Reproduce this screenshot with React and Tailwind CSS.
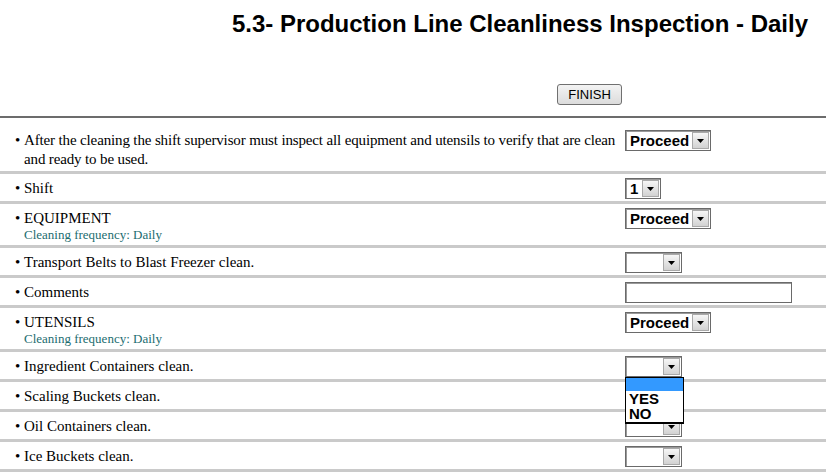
import React from 'react';

const serif = { fontFamily: '"Liberation Serif", "Times New Roman", serif' };

function Arrow() {
  return (
    <div className="m-[1px] flex w-[17px] items-center justify-center border border-[#a9a9a9] bg-gradient-to-b from-[#f6f6f6] to-[#d2d2d2]">
      <svg width="7" height="4" viewBox="0 0 7 4">
        <path d="M0 0h7L3.5 4z" fill="#000" />
      </svg>
    </div>
  );
}

function Select({ value, width, children }) {
  return (
    <div className={`relative flex h-[21px] ${width} border border-[#6a6a6a] bg-white shadow-[inset_1px_1px_0_#9a9a9a]`}>
      <div className="flex-1 truncate pl-[4px] text-[15px] font-bold leading-[19px] text-black">
        {value}
      </div>
      <Arrow />
      {children}
    </div>
  );
}

function Row({ label, sub, children, first }) {
  return (
    <div className="flex border-b-[3px] border-[#cacaca]">
      <div className={`w-[625px] shrink-0 pl-[15px] pr-[4px] pt-[5px] ${first ? 'pb-[2px] tracking-[-0.14px]' : 'pb-[3px]'}`} style={serif}>
        <div className="flex text-[15px] leading-[19px] text-black">
          <span className="w-[9px] shrink-0">•</span>
          <span>{label}</span>
        </div>
        {sub && (
          <div className="pl-[9px] text-[13px] leading-[14px] text-[#1b6d70]">{sub}</div>
        )}
      </div>
      <div className="pt-[4px]">{children}</div>
    </div>
  );
}

export default function App() {
  return (
    <div className="h-[475px] w-[826px] overflow-hidden bg-white" style={{ fontFamily: '"Liberation Sans", Arial, sans-serif' }}>
      <h1 className="pr-[18px] pt-[10px] text-right text-[24px] font-bold leading-[28px] text-black">
        5.3- Production Line Cleanliness Inspection - Daily
      </h1>

      <div className="flex pl-[557px] pt-[46px]">
        <button className="h-[21px] w-[65px] rounded-[3px] border border-[#707070] bg-gradient-to-b from-[#f3f3f3] to-[#dcdcdc] text-[13px] leading-[19px] text-black">
          FINISH
        </button>
      </div>

      <div className="mt-[11px] h-[2px] bg-[#6c6c6c]" />

      <div className="pt-[8px]">
        <Row first label="After the cleaning the shift supervisor must inspect all equipment and utensils to verify that are clean and ready to be used.">
          <Select value="Proceed" width="w-[86px]" />
        </Row>
        <Row label="Shift">
          <Select value="1" width="w-[36px]" />
        </Row>
        <Row label="EQUIPMENT" sub="Cleaning frequency: Daily">
          <Select value="Proceed" width="w-[86px]" />
        </Row>
        <Row label="Transport Belts to Blast Freezer clean.">
          <Select value="" width="w-[57px]" />
        </Row>
        <Row label="Comments">
          <div className="h-[21px] w-[167px] border border-[#6a6a6a] bg-white shadow-[inset_1px_1px_0_#9a9a9a]" />
        </Row>
        <Row label="UTENSILS" sub="Cleaning frequency: Daily">
          <Select value="Proceed" width="w-[86px]" />
        </Row>
        <Row label="Ingredient Containers clean.">
          <Select value="" width="w-[57px]">
            <div className="absolute left-[-1px] top-[20px] z-10 w-[59px] border border-b-2 border-black bg-white text-[15px] font-bold leading-[15px] text-black">
              <div className="h-[13px] bg-[#3399ff]" />
              <div className="pl-[3px]">YES</div>
              <div className="pl-[3px] pb-[1px]">NO</div>
            </div>
          </Select>
        </Row>
        <Row label="Scaling Buckets clean.">
          <Select value="" width="w-[57px]" />
        </Row>
        <Row label="Oil Containers clean.">
          <Select value="" width="w-[57px]" />
        </Row>
        <Row label="Ice Buckets clean.">
          <Select value="" width="w-[57px]" />
        </Row>
      </div>
    </div>
  );
}
